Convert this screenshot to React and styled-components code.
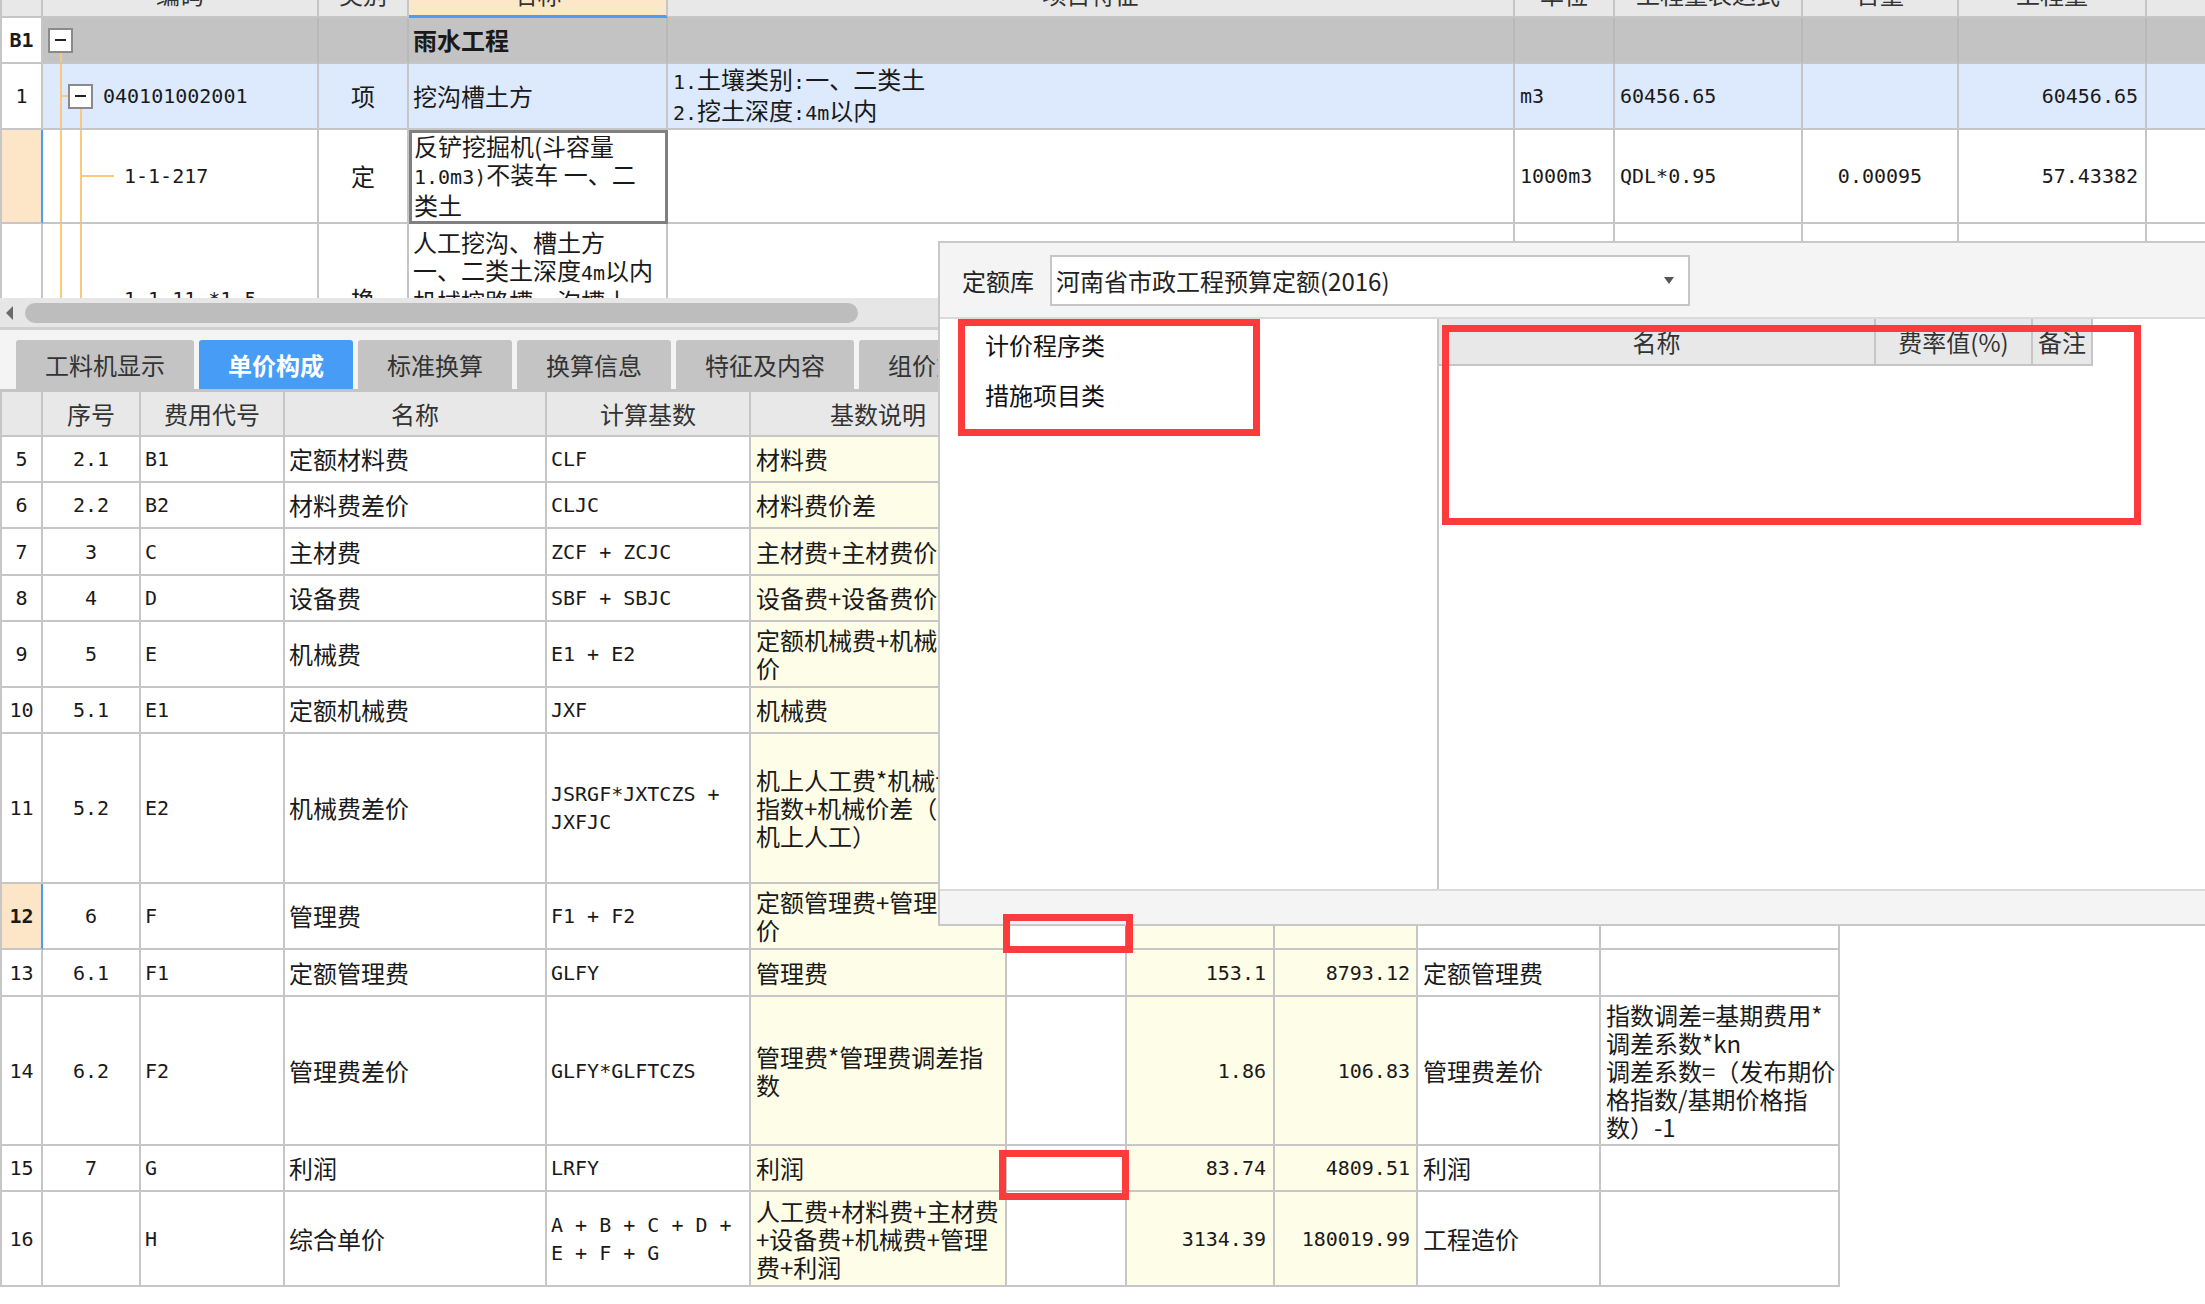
import React from 'react';
import styled, { createGlobalStyle } from 'styled-components';

const CJK = '"Noto Sans CJK SC", "Noto Sans", sans-serif';
const MONO = '"DejaVu Sans Mono", "Liberation Mono", "Noto Sans CJK SC", monospace';

const GlobalStyle = createGlobalStyle`
  html, body { margin: 0; padding: 0; background: #fff; }
  body { font-family: ${CJK}; }
`;

const UP = '41px 276px 90px 259px 847px 100px 188px 156px 188px 200px';
const LOW = '41px 98px 144px 262px 204px 256px 120px 148px 143px 183px 239px';
const GRID = '#c6c6c6';
const YELLOW = '#fefde8';
const PEACH = '#fde6c8';
const BLUE = '#4a9df6';
const TREE = '#fcc87c';

const Screen = styled.div`
  position: relative;
  width: 2205px;
  height: 1304px;
  overflow: hidden;
  background: #fff;
  font-family: ${CJK};
  font-size: 24px;
  color: #1a1a1a;
`;

const UpperViewport = styled.div`
  height: 298px;
  overflow: hidden;
`;

const UpperScroll = styled.div`
  margin-top: -28px;
`;

const Row = styled.div`
  display: grid;
  grid-template-columns: ${(p) => p.$cols};
  height: ${(p) => p.$h}px;
  background: ${(p) => p.$bg || '#fff'};
  border-left: ${(p) => (p.$open ? 'none' : `2px solid ${GRID}`)};
  width: max-content;
`;

const Cell = styled.div`
  box-sizing: border-box;
  min-width: 0;
  position: relative;
  display: flex;
  flex-direction: column;
  justify-content: center;
  align-items: ${(p) => ({ center: 'center', right: 'flex-end' }[p.$align] || 'flex-start')};
  padding: 0 ${(p) => p.$pad ?? 4}px;
  border-right: 2px solid ${(p) => p.$line || GRID};
  border-bottom: ${(p) => p.$underW || 2}px solid ${(p) => p.$under || GRID};
  background: ${(p) => p.$bg || 'transparent'};
  font-family: ${(p) => (p.$mono ? MONO : CJK)};
  font-size: ${(p) => (p.$mono ? 20 : 24)}px;
  font-weight: ${(p) => (p.$bold ? 700 : 400)};
  line-height: 28px;
  white-space: nowrap;
  overflow: hidden;
`;

const HeadCell = styled(Cell)`
  color: #333;
`;

const SelectedCell = styled(Cell)`
  border-right-color: #808080;
  border-bottom-color: #808080;
  border-right-width: 3px;
  border-bottom-width: 3px;
  box-shadow: inset 3px 3px 0 #808080;
  padding-left: 5px;
`;

const Line = styled.span`
  display: block;
`;

const Mono = styled.span`
  font-family: ${MONO};
  font-size: 20px;
`;

const TreeItem = styled.div`
  display: flex;
  align-items: center;
  gap: 10px;
  position: relative;
  z-index: 1;
`;

const Toggle = styled.span`
  box-sizing: border-box;
  width: 25px;
  height: 25px;
  flex: none;
  border: 2px solid #8a8a8a;
  background: #fff;
  display: flex;
  align-items: center;
  justify-content: center;
  &::after {
    content: '';
    width: 11px;
    height: 2px;
    background: #222;
  }
`;

const VLine = styled.span`
  position: absolute;
  left: ${(p) => p.$x}px;
  top: ${(p) => p.$top ?? 0}px;
  bottom: 0;
  width: 2px;
  background: ${TREE};
`;

const HLine = styled.span`
  position: absolute;
  left: ${(p) => p.$x}px;
  width: ${(p) => p.$w}px;
  top: calc(50% - 1px);
  height: 2px;
  background: ${TREE};
`;

const HScroll = styled.div`
  height: 32px;
  box-sizing: border-box;
  background: #e6e6e6;
  border-bottom: 3px solid #cfcfcf;
  display: flex;
  align-items: center;
  padding-left: 6px;
  gap: 12px;
`;

const ScrollArrow = styled.span`
  width: 0;
  height: 0;
  border-top: 7px solid transparent;
  border-bottom: 7px solid transparent;
  border-right: 7px solid #6a6a6a;
`;

const ScrollThumb = styled.span`
  width: 833px;
  height: 20px;
  border-radius: 10px;
  background: #bdbdbd;
`;

const TabStrip = styled.div`
  height: 62px;
  box-sizing: border-box;
  background: #f4f4f4;
  border-bottom: 3px solid #c4c4c4;
  display: flex;
  align-items: flex-end;
  gap: 5px;
  padding-left: 16px;
`;

const Tab = styled.div`
  height: 49px;
  padding: 0 29px;
  display: flex;
  align-items: center;
  flex: none;
  border-radius: 3px 3px 0 0;
  background: ${(p) => (p.$active ? '#479cf6' : '#c4c4c4')};
  color: ${(p) => (p.$active ? '#fff' : '#333')};
  font-weight: ${(p) => (p.$active ? 700 : 400)};
`;

const Popup = styled.div`
  position: absolute;
  left: 938px;
  top: 241px;
  right: 0;
  height: 685px;
  box-sizing: border-box;
  border: 2px solid #c8c8c8;
  border-right: none;
  background: #f4f4f4;
  display: flex;
  flex-direction: column;
`;

const PopupBar = styled.div`
  height: 76px;
  box-sizing: border-box;
  border-bottom: 2px solid #dadada;
  display: flex;
  align-items: center;
  gap: 16px;
  padding-left: 22px;
  color: #222;
`;

const Combo = styled.div`
  box-sizing: border-box;
  width: 640px;
  height: 51px;
  border: 2px solid #c6c6c6;
  background: #fff;
  display: flex;
  align-items: center;
  justify-content: space-between;
  padding: 0 14px 0 4px;
`;

const ComboArrow = styled.span`
  width: 0;
  height: 0;
  border-left: 5px solid transparent;
  border-right: 5px solid transparent;
  border-top: 7px solid #555;
`;

const PopupBody = styled.div`
  height: 570px;
  display: flex;
  background: #fff;
`;

const CategoryPane = styled.div`
  width: 497px;
  flex: none;
  border-right: 2px solid #c8c8c8;
`;

const CategoryItem = styled.div`
  height: 50px;
  display: flex;
  align-items: center;
  padding-left: 45px;
  color: #111;
`;

const RatePane = styled.div`
  flex: 1;
`;

const PopupFoot = styled.div`
  flex: 1;
  border-top: 2px solid #dadada;
`;

const Mark = styled.div`
  position: absolute;
  box-sizing: border-box;
  left: ${(p) => p.$x}px;
  top: ${(p) => p.$y}px;
  width: ${(p) => p.$w}px;
  height: ${(p) => p.$h}px;
  border: 7px solid #fd3a3c;
  pointer-events: none;
`;

const upHead = ['', '编码', '类别', '名称', '项目特征', '单位', '工程量表达式', '含量', '工程量', ''];

const lowHead = ['', '序号', '费用代号', '名称', '计算基数', '基数说明', '费率(%)', '单价', '合价', '费用类别', '备注'];

const feeRows = [
  { n: '5', seq: '2.1', code: 'B1', name: '定额材料费', base: ['CLF'], desc: ['材料费'], h: 46 },
  { n: '6', seq: '2.2', code: 'B2', name: '材料费差价', base: ['CLJC'], desc: ['材料费价差'], h: 46 },
  { n: '7', seq: '3', code: 'C', name: '主材费', base: ['ZCF + ZCJC'], desc: ['主材费+主材费价差'], h: 47 },
  { n: '8', seq: '4', code: 'D', name: '设备费', base: ['SBF + SBJC'], desc: ['设备费+设备费价差'], h: 46 },
  { n: '9', seq: '5', code: 'E', name: '机械费', base: ['E1 + E2'], desc: ['定额机械费+机械费差', '价'], h: 66 },
  { n: '10', seq: '5.1', code: 'E1', name: '定额机械费', base: ['JXF'], desc: ['机械费'], h: 46 },
  {
    n: '11', seq: '5.2', code: 'E2', name: '机械费差价', base: ['JSRGF*JXTCZS +', 'JXFJC'],
    desc: ['机上人工费*机械调差', '指数+机械价差（不含', '机上人工）'], h: 150,
  },
  { n: '12', seq: '6', code: 'F', name: '管理费', base: ['F1 + F2'], desc: ['定额管理费+管理费差', '价'], h: 66, current: true },
  { n: '13', seq: '6.1', code: 'F1', name: '定额管理费', base: ['GLFY'], desc: ['管理费'], price: '153.1', total: '8793.12', kind: '定额管理费', h: 47 },
  {
    n: '14', seq: '6.2', code: 'F2', name: '管理费差价', base: ['GLFY*GLFTCZS'], desc: ['管理费*管理费调差指', '数'],
    price: '1.86', total: '106.83', kind: '管理费差价',
    note: ['指数调差=基期费用*', '调差系数*kn', '调差系数=（发布期价', '格指数/基期价格指', '数）-1'], h: 149,
  },
  { n: '15', seq: '7', code: 'G', name: '利润', base: ['LRFY'], desc: ['利润'], price: '83.74', total: '4809.51', kind: '利润', h: 46 },
  {
    n: '16', seq: '', code: 'H', name: '综合单价', base: ['A + B + C + D +', 'E + F + G'],
    desc: ['人工费+材料费+主材费', '+设备费+机械费+管理', '费+利润'], price: '3134.39', total: '180019.99', kind: '工程造价', h: 95,
  },
];

const Lines = ({ list }) => (list || []).map((t, i) => <Line key={i}>{t}</Line>);

const FeeRow = ({ r }) => (
  <Row $cols={LOW} $h={r.h}>
    <Cell $mono $align="center" $pad={0} $bold={r.current} $bg={r.current ? PEACH : undefined} $line={r.current ? BLUE : undefined}>
      {r.n}
    </Cell>
    <Cell $mono $align="center">{r.seq}</Cell>
    <Cell $mono>{r.code}</Cell>
    <Cell>{r.name}</Cell>
    <Cell $mono><Lines list={r.base} /></Cell>
    <Cell $bg={YELLOW} $pad={5}><Lines list={r.desc} /></Cell>
    <Cell $line={r.current ? BLUE : undefined} />
    <Cell $mono $align="right" $pad={7} $bg={YELLOW}>{r.price}</Cell>
    <Cell $mono $align="right" $pad={6} $bg={YELLOW}>{r.total}</Cell>
    <Cell $pad={5}>{r.kind}</Cell>
    <Cell $pad={5}><Lines list={r.note} /></Cell>
  </Row>
);

const tabs = ['工料机显示', '单价构成', '标准换算', '换算信息', '特征及内容', '组价方案'];

export default function App() {
  return (
    <>
      <GlobalStyle />
      <Screen>
        <UpperViewport>
          <UpperScroll>
            <Row $cols={UP} $h={46} $bg="#e8e8e8">
              {upHead.map((t, i) => (
                <HeadCell
                  key={i}
                  $align="center"
                  $bg={i === 3 ? '#fde7c9' : undefined}
                  $under={i === 3 ? BLUE : undefined}
                  $underW={i === 3 ? 3 : 2}
                >
                  {t}
                </HeadCell>
              ))}
            </Row>

            <Row $cols={UP} $h={46} $bg="#c3c3c3">
              <Cell $bg="#fff" $mono $bold $align="center" $pad={0}>B1</Cell>
              <Cell $pad={5} $line="#b9b9b9">
                <VLine $x={17} $top={34} />
                <TreeItem><Toggle /></TreeItem>
              </Cell>
              <Cell $line="#b9b9b9" />
              <Cell $bold $line="#b9b9b9">雨水工程</Cell>
              <Cell $line="#b9b9b9" />
              <Cell $line="#b9b9b9" />
              <Cell $line="#b9b9b9" />
              <Cell $line="#b9b9b9" />
              <Cell $line="#b9b9b9" />
              <Cell $line="#b9b9b9" />
            </Row>

            <Row $cols={UP} $h={66} $bg="#dde9fc">
              <Cell $bg="#fff" $mono $align="center" $pad={0}>1</Cell>
              <Cell $pad={25}>
                <VLine $x={17} />
                <HLine $x={17} $w={8} />
                <VLine $x={37} $top={44} />
                <TreeItem>
                  <Toggle />
                  <Mono>040101002001</Mono>
                </TreeItem>
              </Cell>
              <Cell $align="center">项</Cell>
              <Cell>挖沟槽土方</Cell>
              <Cell $pad={5}>
                <Line><Mono>1.</Mono>土壤类别<Mono>:</Mono>一、二类土</Line>
                <Line><Mono>2.</Mono>挖土深度<Mono>:4m</Mono>以内</Line>
              </Cell>
              <Cell $mono $pad={5}>m3</Cell>
              <Cell $mono $pad={5}>60456.65</Cell>
              <Cell />
              <Cell $mono $align="right" $pad={7}>60456.65</Cell>
              <Cell />
            </Row>

            <Row $cols={UP} $h={94}>
              <Cell $bg={PEACH} $line={BLUE} />
              <Cell $mono $pad={81}>
                <VLine $x={17} />
                <VLine $x={37} />
                <HLine $x={37} $w={34} />
                <TreeItem>1-1-217</TreeItem>
              </Cell>
              <Cell $align="center">定</Cell>
              <SelectedCell>
                <Line>反铲挖掘机(斗容量</Line>
                <Line><Mono>1.0m3)</Mono>不装车 一、二</Line>
                <Line>类土</Line>
              </SelectedCell>
              <Cell />
              <Cell $mono $pad={5}>1000m3</Cell>
              <Cell $mono $pad={5}>QDL*0.95</Cell>
              <Cell $mono $align="center">0.00095</Cell>
              <Cell $mono $align="right" $pad={7}>57.43382</Cell>
              <Cell />
            </Row>

            <Row $cols={UP} $h={152}>
              <Cell />
              <Cell $mono $pad={81}>
                <VLine $x={17} />
                <VLine $x={37} />
                <HLine $x={37} $w={34} />
                <TreeItem>1-1-11 *1.5</TreeItem>
              </Cell>
              <Cell $align="center">换</Cell>
              <Cell>
                <Line>人工挖沟、槽土方</Line>
                <Line>一、二类土深度<Mono>4m</Mono>以内</Line>
                <Line>机械挖路槽、沟槽土</Line>
                <Line>方 人工*1.5</Line>
                <Line>机械*1.5</Line>
              </Cell>
              <Cell />
              <Cell $mono $pad={5}>m3</Cell>
              <Cell />
              <Cell />
              <Cell />
              <Cell />
            </Row>
          </UpperScroll>
        </UpperViewport>

        <HScroll>
          <ScrollArrow />
          <ScrollThumb />
        </HScroll>

        <TabStrip>
          {tabs.map((t, i) => (
            <Tab key={t} $active={i === 1}>{t}</Tab>
          ))}
        </TabStrip>

        <Row $cols={LOW} $h={45} $bg="#e8e8e8">
          {lowHead.map((t, i) => (
            <HeadCell key={i} $align="center">{t}</HeadCell>
          ))}
        </Row>
        {feeRows.map((r) => (
          <FeeRow key={r.n} r={r} />
        ))}

        <Popup>
          <PopupBar>
            <span>定额库</span>
            <Combo>
              <span>河南省市政工程预算定额(2016)</span>
              <ComboArrow />
            </Combo>
          </PopupBar>
          <PopupBody>
            <CategoryPane>
              <CategoryItem>计价程序类</CategoryItem>
              <CategoryItem>措施项目类</CategoryItem>
            </CategoryPane>
            <RatePane>
              <Row $cols="437px 157px 60px" $h={47} $bg="#e8e8e8" $open>
                <HeadCell $align="center">名称</HeadCell>
                <HeadCell $align="center" $pad={0}>费率值(%)</HeadCell>
                <HeadCell $align="center" $pad={0}>备注</HeadCell>
              </Row>
            </RatePane>
          </PopupBody>
          <PopupFoot />
        </Popup>

        <Mark $x={958} $y={319} $w={302} $h={117} />
        <Mark $x={1442} $y={325} $w={699} $h={200} />
        <Mark $x={1003} $y={914} $w={130} $h={39} />
        <Mark $x={999} $y={1150} $w={130} $h={50} />
      </Screen>
    </>
  );
}
